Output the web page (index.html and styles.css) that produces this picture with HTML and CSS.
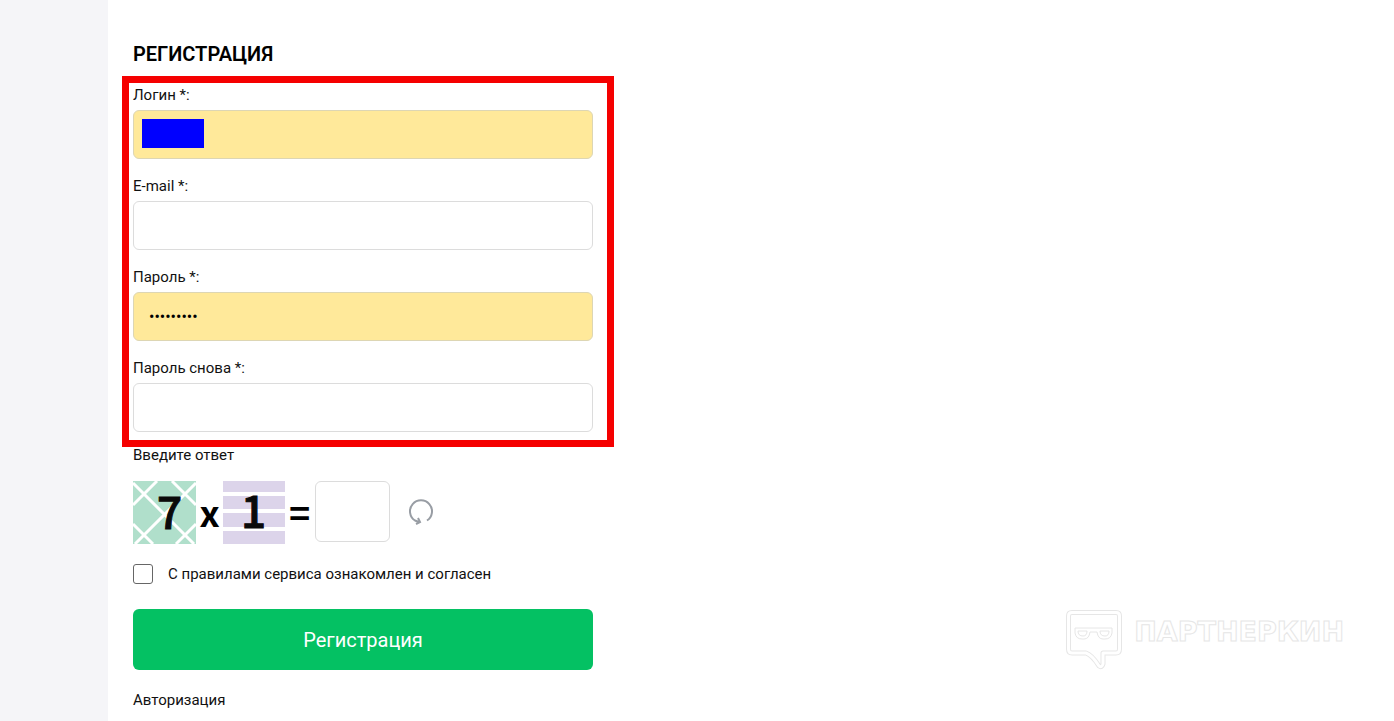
FILE: index.html
```
<!DOCTYPE html>
<html lang="ru">
<head>
	<meta charset="UTF-8">
	<title>Регистрация</title>
	<link rel="stylesheet" href="styles.css">
</head>
<body>
	<div class="main">
		<form class="reg_form">
			<h1>РЕГИСТРАЦИЯ</h1>
			<div class="fields">
				<div class="field">
					<label for="login">Логин *:</label>
					<input class="filled" type="text" id="login">
					<span class="login_mark"></span>
				</div>
				<div class="field">
					<label for="email">E-mail *:</label>
					<input type="email" id="email">
				</div>
				<div class="field">
					<label for="pass">Пароль *:</label>
					<input class="filled" type="password" id="pass" value="123456789">
				</div>
				<div class="field">
					<label for="pass2">Пароль снова *:</label>
					<input type="password" id="pass2">
				</div>
				<div class="frame"></div>
			</div>
			<label class="captcha_label" for="answer">Введите ответ</label>
			<div class="captcha">
				<svg class="tile" viewBox="0 0 63 63">
					<rect width="63" height="63" fill="#b0dfcb"/>
					<path d="M0 24L24 0M2 63L63 2M43 63L63 43M0 2L61 63M39 0L63 24M0 43L20 63" fill="none" stroke="#fff" stroke-width="3"/>
					<text x="24" y="48">7</text>
				</svg>
				<span class="sign">x</span>
				<svg class="tile" viewBox="0 0 63 63">
					<rect width="62" height="63" fill="#dcd4ea"/>
					<path d="M0 13H63M0 30H63M0 48H63" stroke="#fff" stroke-width="4"/>
					<text x="18" y="47">1</text>
				</svg>
				<span class="sign">=</span>
				<input type="text" id="answer">
				<button class="reload" type="button" aria-label="Обновить">
					<svg viewBox="0 0 26 26" width="26" height="26" fill="none" stroke="#989da4" stroke-width="2">
						<path d="M19 21.500A11 11 0 1 0 7 21.500L11 23"/>
						<path d="M8 25L12 23L10 19"/>
					</svg>
				</button>
			</div>
			<div class="rules">
				<input type="checkbox" id="rules">
				<label for="rules">С правилами сервиса ознакомлен и согласен</label>
			</div>
			<button class="submit" type="submit">Регистрация</button>
			<a class="auth" href="#">Авторизация</a>
		</form>
	</div>
	<div class="watermark">
		<svg viewBox="0 0 56 60" width="56" height="60" fill="none" stroke-linejoin="round">
			<path d="M6 2.500H50Q53.500 2.500 53.500 6V39Q53.500 43 50 43H37V54Q36 58 33 56Q26 45 20 43H6Q2.500 43 2.500 39V6Q2.500 2.500 6 2.500Z" stroke="#e6e6e6" stroke-width="5"/>
			<path d="M6 2.500H50Q53.500 2.500 53.500 6V39Q53.500 43 50 43H37V54Q36 58 33 56Q26 45 20 43H6Q2.500 43 2.500 39V6Q2.500 2.500 6 2.500Z" stroke="#fff" stroke-width="3"/>
			<path d="M9 18H46V23Q45 29 39 29H37Q32 29 31 22H24Q23 29 18 29H16Q10 29 9 23ZM12 21H21Q21 26 17 26Q12 26 12 21ZM34 21H43Q43 26 39 26Q34 26 34 21Z" stroke="#e6e6e6"/>
		</svg>
		<span>ПАРТНЕРКИН</span>
	</div>
</body>
</html>
```
FILE: styles.css
```
*{box-sizing:border-box;}
body{margin:0;min-height:100vh;padding-left:108px;background:#f5f5f8;font:15px/20px Roboto,"Liberation Sans",sans-serif;color:#111;display:flex;}
.main{flex:1;padding:40px 25px 10px;background:#fff;}
.reg_form{max-width:460px;}
h1{margin:0 0 17px;font-size:20px;line-height:28px;font-weight:600;color:#000;}
.fields{position:relative;display:flex;flex-direction:column;gap:17px;}
.field{position:relative;}
.field label{display:block;margin-bottom:5px;}
.field input{display:block;width:100%;height:49px;padding:0 15px;border:1px solid #dcdcdc;border-radius:6px;background:#fff;font:16px Roboto,sans-serif;color:#000;}
.field input.filled{background:#ffe99a;border-color:#ddd6b4;}
.login_mark{position:absolute;left:9px;bottom:11px;width:62px;height:29px;background:#00f;}
.frame{position:absolute;top:-9px;right:-21px;bottom:-15px;left:-11px;border:7px solid #f50000;pointer-events:none;}
.captcha_label{display:block;margin:13px 0 16px;}
.captcha{display:flex;align-items:flex-start;height:63px;}
.tile{width:63px;height:63px;overflow:visible;}
.tile text{font:500 44px "Noto Sans CJK SC",sans-serif;fill:#0a0a0a;stroke:#0a0a0a;stroke-width:1px;}
.sign{width:27px;font:bold 36px/60px "Noto Sans CJK SC",sans-serif;color:#000;text-align:center;}
.captcha input{width:75px;height:61px;margin-left:2px;border:1px solid #dcdcdc;border-radius:6px;background:#fff;text-align:center;font:20px Roboto,sans-serif;}
.reload{width:26px;height:26px;margin:18px 0 0 18px;padding:0;border:0;background:none;cursor:pointer;}
.rules{display:flex;align-items:center;gap:15px;margin-top:20px;}
.rules input{appearance:none;width:20px;height:20px;margin:0;border:1px solid #666;border-radius:3px;background:#fff;}
.rules input:checked{background:#04c163;}
.submit{display:block;width:100%;height:61px;margin:25px 0 20px;border:0;border-radius:6px;background:#04c163;color:#fff;font:20px Roboto,sans-serif;cursor:pointer;}
.auth{color:#111;text-decoration:none;}
.watermark{position:absolute;right:50px;bottom:51px;display:flex;gap:12px;}
.watermark span{font:bold 27px/44px "DejaVu Sans",sans-serif;color:#fff;-webkit-text-stroke:1px #e6e6e6;}
```
